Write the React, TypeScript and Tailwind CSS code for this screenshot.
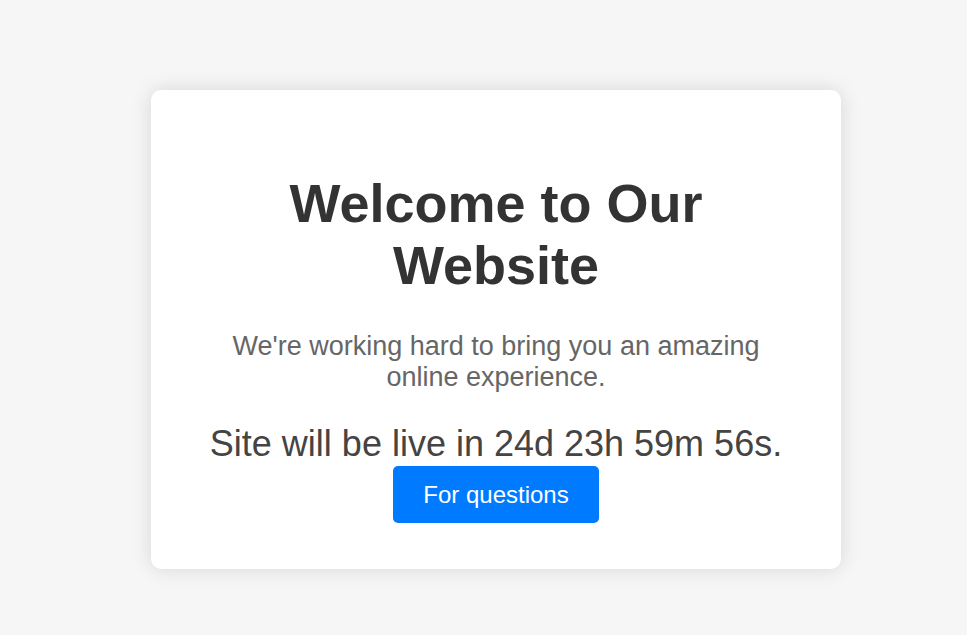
import React from "react";

export default function App() {
  return (
    <div
      className="min-h-screen w-full bg-[#f6f6f6] pt-[90px] pl-[151px]"
      style={{ fontFamily: '"Liberation Sans", Arial, sans-serif' }}
    >
      <div className="w-[690px] rounded-[10px] bg-white px-[45px] pt-[82px] pb-[46px] text-center shadow-[0_0_20px_rgba(0,0,0,0.13)]">
        <h1 className="text-[54px] font-bold leading-[62px] text-[#333333]">
          Welcome to Our Website
        </h1>
        <p className="mt-[35px] text-[27px] leading-[31px] text-[#666666]">
          We're working hard to bring you an amazing online experience.
        </p>
        <div className="mt-[30px] text-[36px] leading-[41px] text-[#444444]">
          Site will be live in 24d 23h 59m 56s.
        </div>
        <div className="mt-[2px] flex justify-center">
          <a
            href="#"
            className="block rounded-[5px] bg-[#007bff] px-[30px] py-[15px] text-[24px] leading-[27px] text-white"
          >
            For questions
          </a>
        </div>
      </div>
    </div>
  );
}
